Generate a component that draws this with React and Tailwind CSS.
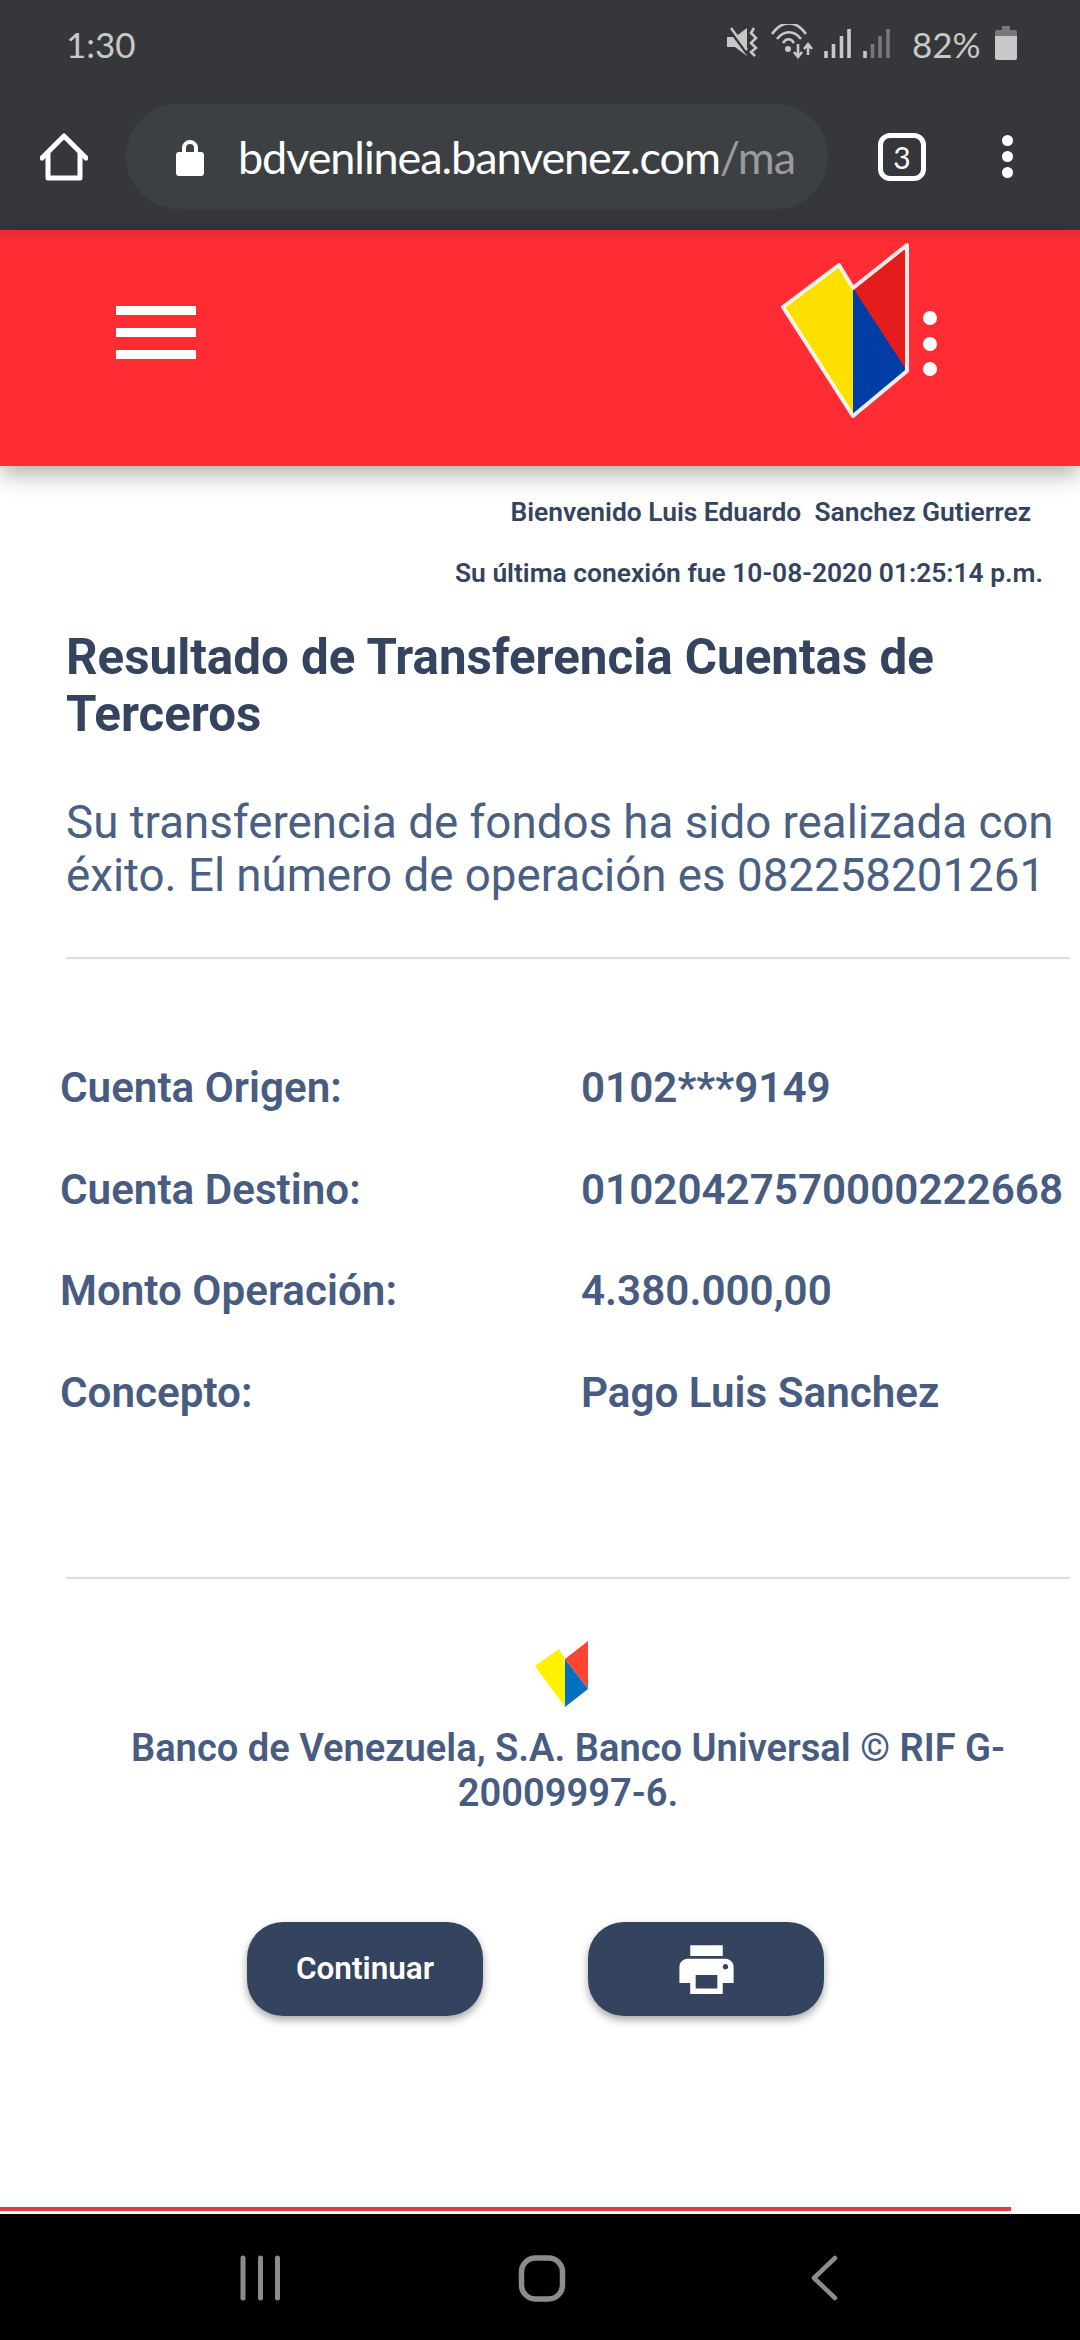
import React from "react";
import { MdPrint } from "react-icons/md";

const rows = [
  ["Cuenta Origen:", "0102***9149"],
  ["Cuenta Destino:", "01020427570000222668"],
  ["Monto Operación:", "4.380.000,00"],
  ["Concepto:", "Pago Luis Sanchez"],
];

const StatusIcons = () => (
  <svg width="295" height="40" viewBox="725 24 295 40" className="block">
    {/* mute */}
    <path d="M728 37h8l12-9v28l-12-9h-8z" fill="#c8c8c8" />
    <path d="M728 26l22 30" stroke="#36373b" strokeWidth="3" />
    <path d="M732 28l16 22" stroke="#c8c8c8" strokeWidth="2.5" />
    <path d="M755 28l-3 5 5 5-5 5 5 5-5 4 4 4" stroke="#c8c8c8" strokeWidth="2.6" fill="none" />
    {/* wifi */}
    <path d="M773 38c10-14 24-14 34 0M778 43c7-9 17-9 24 0M784 47c3-5 8-5 11 0" stroke="#c8c8c8" strokeWidth="2.6" fill="none" transform="translate(0 -4)" />
    <circle cx="789" cy="49" r="3" fill="#c8c8c8" />
    <path d="M799 44v12m-4-4l4 5 4-5M809 55V45m-4 4l4-5 4 5" stroke="#c8c8c8" strokeWidth="2.6" fill="none" />
    {/* signal */}
    <path d="M827 58v-7M834.5 58V44M842.5 58V36M850 58V29" stroke="#c8c8c8" strokeWidth="3.6" />
    <path d="M866 58v-7" stroke="#c8c8c8" strokeWidth="3.6" />
    <path d="M873.5 58V44M881 58V36M889 58V29" stroke="#77787b" strokeWidth="3.6" />
  </svg>
);

const BigLogo = () => (
  <svg width="165" height="188" viewBox="775 236 165 188" className="block">
    <path d="M854 288L907 245V371L853 416Z" fill="#e31c1c" />
    <path d="M853 288L907 371L853 416Z" fill="#003da5" />
    <path d="M783 307L839 265L853 288V416Z" fill="#fde000" />
    <path d="M853 288L839 265L783 307L853 416L907 371V245Z" fill="none" stroke="#fff" strokeWidth="4" strokeLinejoin="round" opacity="0.9" />
    <circle cx="930" cy="318" r="7" fill="#fff" />
    <circle cx="930" cy="344" r="7" fill="#fff" />
    <circle cx="930" cy="369" r="7" fill="#fff" />
  </svg>
);

const SmallLogo = () => (
  <svg width="60" height="70" viewBox="530 1638 60 70" className="block">
    <path d="M564 1658L587 1640V1688Z" fill="#ff4433" />
    <path d="M564 1658L587 1688L564 1706Z" fill="#0070c0" />
    <path d="M534 1665L558 1648L564 1658V1706Z" fill="#fff200" />
  </svg>
);

const App = () => {
  return (
    <div className="w-[1080px] h-[2340px] flex flex-col bg-white overflow-hidden font-['Roboto',sans-serif]">
      <div className="h-[104px] bg-[#36373b] flex items-start shrink-0">
        <span className="ml-[66px] mt-[22px] text-[35px] leading-[44px] text-[#c8c8c8] font-['Lato',sans-serif]">1:30</span>
        <div className="ml-auto mt-[0px] flex items-start">
          <div className="mt-[24px]"><StatusIcons /></div>
          <span className="-ml-[107px] mt-[22px] w-[76px] text-[35px] leading-[44px] text-[#c8c8c8] font-['Lato',sans-serif]">82%</span>
          <svg width="22" height="34" viewBox="0 0 22 34" className="ml-[7px] mt-[26px] mr-[63px]">
            <path d="M7 0h8v4H7z" fill="#77787b" />
            <path d="M0 6a2 2 0 012-2h18a2 2 0 012 2v4H0z" fill="#77787b" />
            <path d="M0 10h22v22a2 2 0 01-2 2H2a2 2 0 01-2-2z" fill="#c8c8c8" />
          </svg>
        </div>
      </div>

      <div className="h-[126px] bg-[#36373b] flex items-start shrink-0">
        <svg width="48" height="48" viewBox="0 0 48 48" className="ml-[40px] mt-[29px]" fill="none" stroke="#fff" strokeWidth="5" strokeLinecap="round" strokeLinejoin="round">
          <path d="M2 25L24 3l22 22M8 20v25h32V20" />
        </svg>
        <div className="ml-[38px] w-[702px] h-[105px] rounded-full bg-[#3d4043] flex items-center overflow-hidden">
          <svg width="30" height="38" viewBox="0 0 30 38" className="ml-[49px]" fill="#fff">
            <path d="M7 15V10a8 8 0 0116 0v5h-4V10a4 4 0 00-8 0v5z" />
            <rect x="1" y="14" width="28" height="24" rx="3" />
          </svg>
          <span className="ml-[33px] text-[45px] leading-[60px] text-white font-['Lato',sans-serif] whitespace-nowrap tracking-[-1.1px]">
            bdvenlinea.banvenez.com<span className="text-[#9a9b9d]">/ma</span>
          </span>
        </div>
        <div className="ml-[50px] mt-[29px] w-[48px] h-[48px] rounded-[12px] border-[5px] border-white flex items-center justify-center text-[30px] leading-none text-white font-['Lato',sans-serif]">3</div>
        <div className="ml-[76px] mt-[31px] flex flex-col gap-[5px]">
          <div className="w-[11px] h-[11px] rounded-full bg-white" />
          <div className="w-[11px] h-[11px] rounded-full bg-white" />
          <div className="w-[11px] h-[11px] rounded-full bg-white" />
        </div>
      </div>

      <header className="relative h-[236px] shrink-0 bg-[linear-gradient(#ea2830,#ff2c33_14px)] shadow-[0_8px_22px_rgba(0,0,0,0.32)] flex items-start">
        <div className="ml-[116px] mt-[76px] w-[80px] flex flex-col gap-[13px]">
          <div className="h-[9px] bg-white" />
          <div className="h-[9px] bg-white" />
          <div className="h-[9px] bg-white" />
        </div>
        <div className="ml-[579px] mt-[6px]"><BigLogo /></div>
      </header>

      <main className="flex-1 flex flex-col">
        <p className="mt-[31px] pr-[49px] text-right text-[26.4px] leading-[30px] font-semibold text-[#34445e] whitespace-pre">Bienvenido Luis Eduardo  Sanchez Gutierrez</p>
        <p className="mt-[31px] pr-[37px] text-right text-[26.4px] leading-[30px] font-semibold text-[#34445e]">Su última conexión fue 10-08-2020 01:25:14 p.m.</p>

        <h1 className="mt-[41px] ml-[66px] w-[1000px] text-[49.3px] leading-[57px] font-bold text-[#34445e]">Resultado de Transferencia Cuentas de Terceros</h1>
        <p className="mt-[53px] ml-[66px] w-[1010px] text-[45.7px] leading-[53px] text-[#4a5f82]">Su transferencia de fondos ha sido realizada con éxito. El número de operación es 082258201261</p>

        <div className="mt-[55px] ml-[66px] w-[1004px] h-[2px] bg-[#dddddd]" />

        <div className="mt-[78px] ml-[60px] flex flex-col">
          {rows.map(([label, value]) => (
            <div key={label} className="h-[101.5px] flex text-[42.2px] leading-[101.5px] font-semibold text-[#475c80]">
              <span className="w-[521px]">{label}</span>
              <span>{value}</span>
            </div>
          ))}
        </div>

        <div className="mt-[134px] ml-[66px] w-[1004px] h-[2px] bg-[#dddddd]" />

        <div className="ml-[66px] w-[1004px] flex flex-col items-center">
          <div className="mt-[60px] mr-[14px]"><SmallLogo /></div>
          <p className="mt-[17px] w-[900px] text-center text-[38.1px] leading-[45px] font-semibold text-[#475c80]">Banco de Venezuela, S.A. Banco Universal © RIF G-20009997-6.</p>
        </div>

        <div className="mt-[106px] ml-[247px] flex gap-[105px]">
          <button className="w-[236px] h-[94px] rounded-[36px] bg-[#34445e] shadow-[0_4px_8px_rgba(0,0,0,0.35)] text-white text-[31.5px] font-semibold flex items-center justify-center">Continuar</button>
          <button className="w-[236px] h-[94px] rounded-[36px] bg-[#34445e] shadow-[0_4px_8px_rgba(0,0,0,0.35)] text-white flex items-center justify-center"><MdPrint size={65} /></button>
        </div>

        <div className="mt-auto mb-[3px] w-[1011px] h-[4px] bg-[#e63946]" />
      </main>

      <nav className="h-[126px] shrink-0 bg-black flex items-start">
        <svg width="44" height="46" viewBox="0 0 44 46" className="ml-[239px] mt-[41px]" stroke="#8c8c8c" strokeWidth="5" strokeLinecap="round">
          <path d="M4 3v40M21.5 3v40M38.5 3v40" />
        </svg>
        <svg width="48" height="48" viewBox="0 0 48 48" className="ml-[235px] mt-[41px]" fill="none" stroke="#8c8c8c" strokeWidth="5.5">
          <rect x="3.5" y="3" width="41" height="41" rx="14" />
        </svg>
        <svg width="30" height="46" viewBox="0 0 30 46" className="ml-[243px] mt-[41px]" fill="none" stroke="#8c8c8c" strokeWidth="4.5" strokeLinecap="round" strokeLinejoin="round">
          <path d="M26 3L5 23l21 20" />
        </svg>
      </nav>
    </div>
  );
};

export default App;
